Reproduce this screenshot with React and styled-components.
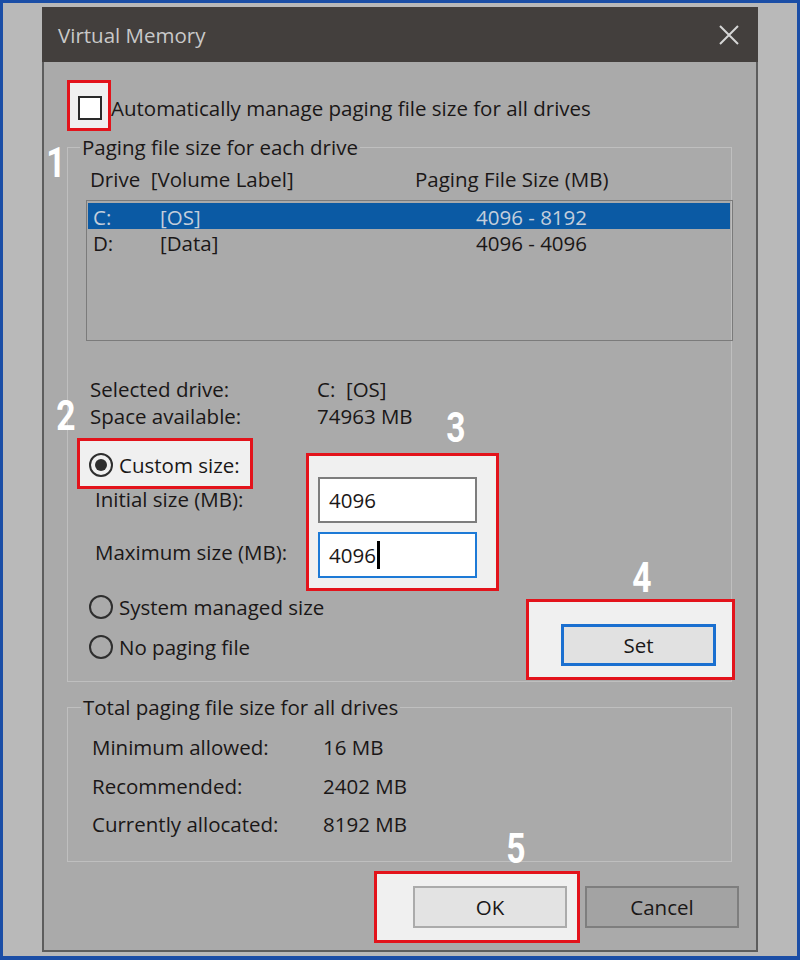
import React from 'react';
import styled, { createGlobalStyle } from 'styled-components';

const GlobalStyle = createGlobalStyle`
  html, body {
    margin: 0;
    padding: 0;
  }
  body {
    font-family: 'Open Sans', 'Noto Sans', sans-serif;
  }
`;

const Frame = styled.div`
  position: relative;
  box-sizing: border-box;
  width: 800px;
  height: 960px;
  border: 3px solid #1b4ea6;
  border-bottom-width: 4px;
  background: #b9b9b9;
  padding: 4px 0 0 39px;
`;

const Dialog = styled.div`
  width: 716px;
  height: 945px;
  display: flex;
  flex-direction: column;
`;

const TitleBar = styled.div`
  height: 55px;
  flex-shrink: 0;
  background: #433f3d;
  display: flex;
  align-items: center;
  justify-content: space-between;
  padding: 0 19px 0 16px;
  color: #c9c9c9;
  font-size: 20.5px;
`;

const Body = styled.div`
  flex: 1;
  background: #aaaaaa;
  border: 2px solid #5d5d5d;
  border-top: 0;
  padding: 18px 17px 0 23px;
  color: #1a1717;
  font-size: 20.5px;
  line-height: 24px;
  white-space: nowrap;
  display: flex;
  flex-direction: column;
  align-items: flex-start;
`;

const Highlight = styled.div`
  box-sizing: border-box;
  flex-shrink: 0;
  width: ${(p) => p.$w}px;
  height: ${(p) => p.$h}px;
  margin: ${(p) => p.$m || '0'};
  padding: ${(p) => p.$pad || '0'};
  border: 3px solid #e3131b;
  background: #f0f0f0;
`;

const CheckRow = styled.div`
  display: flex;
  align-items: flex-start;
`;

const CheckBox = styled.span`
  display: block;
  box-sizing: border-box;
  width: 24px;
  height: 24px;
  border: 2px solid #2a2a2a;
  background: #ffffff;
`;

const CheckLabel = styled.span`
  margin-top: 16px;
`;

const Group = styled.fieldset`
  box-sizing: border-box;
  width: 665px;
  min-width: 0;
  margin: ${(p) => p.$mt}px 0 0 0;
  padding: 0 0 ${(p) => p.$pb}px 0;
  border: 1px solid #bfbfbf;
`;

const Legend = styled.legend`
  margin-left: ${(p) => p.$ml}px;
  padding: 0 2px;
  line-height: 24px;
`;

const Columns = styled.div`
  display: flex;
  margin-top: ${(p) => p.$mt || 0}px;
  padding-left: ${(p) => p.$pl}px;
  line-height: ${(p) => p.$lh || 24}px;
`;

const Col = styled.span`
  flex-shrink: 0;
  width: ${(p) => p.$w}px;
`;

const List = styled.div`
  box-sizing: border-box;
  width: 647px;
  height: 141px;
  margin: 9px 0 0 18px;
  padding: 2px 2px 2px 1px;
  border: 1px solid #7b7b7b;
`;

const ListRow = styled.div`
  box-sizing: border-box;
  display: flex;
  height: 26px;
  padding: 1px 0 0 5px;
  line-height: 26px;
  background: ${(p) => (p.$selected ? '#0b5aa4' : 'transparent')};
  color: ${(p) => (p.$selected ? '#c3cedc' : 'inherit')};
`;

const Info = styled.div`
  margin-top: 35px;
`;

const Middle = styled.div`
  display: flex;
  align-items: flex-start;
  margin-top: 8px;
  padding-left: 9px;
`;

const LeftCol = styled.div`
  flex-shrink: 0;
  width: 229px;
  display: flex;
  flex-direction: column;
  align-items: flex-start;
`;

const RadioRow = styled.div`
  display: flex;
  align-items: center;
  gap: 6px;
  height: ${(p) => p.$h || 24}px;
  margin-top: ${(p) => p.$mt || 0}px;
  padding-left: ${(p) => p.$pl || 0}px;
`;

const Radio = styled.span`
  position: relative;
  box-sizing: border-box;
  flex-shrink: 0;
  width: 24px;
  height: 24px;
  border: 2px solid #2e2e2e;
  border-radius: 50%;

  &::after {
    content: '';
    display: ${(p) => (p.$checked ? 'block' : 'none')};
    position: absolute;
    left: 4px;
    top: 4px;
    width: 12px;
    height: 12px;
    border-radius: 50%;
    background: #2e2e2e;
  }
`;

const FieldLabel = styled.div`
  margin-top: ${(p) => p.$mt}px;
  padding-left: 18px;
`;

const Input = styled.div`
  box-sizing: border-box;
  width: 159px;
  height: 46px;
  margin-top: ${(p) => p.$mt || 0}px;
  display: flex;
  align-items: center;
  padding-left: 9px;
  background: #ffffff;
  border: 2px solid ${(p) => (p.$focused ? '#1d7ad6' : '#7d7d7d')};
`;

const Caret = styled.span`
  display: inline-block;
  width: 3px;
  height: 28px;
  margin-left: 1px;
  background: #000000;
`;

const Button = styled.div`
  box-sizing: border-box;
  flex-shrink: 0;
  width: ${(p) => p.$w}px;
  height: 42px;
  margin: ${(p) => p.$m || '0'};
  display: flex;
  align-items: center;
  justify-content: center;
  background: ${(p) => p.$bg};
  border: ${(p) => p.$border};
`;

const Totals = styled.div`
  display: flex;
  flex-direction: column;
  gap: 14.5px;
  margin-top: 16px;
`;

const ButtonRow = styled.div`
  align-self: stretch;
  display: flex;
  justify-content: flex-end;
  align-items: flex-start;
  margin-top: 9px;
`;

const Marker = styled.span`
  position: absolute;
  left: ${(p) => p.$x}px;
  top: ${(p) => p.$y}px;
  width: 40px;
  text-align: center;
  font-family: Roboto, 'Liberation Sans', sans-serif;
  font-weight: 700;
  font-size: 42px;
  line-height: 42px;
  color: #ffffff;
  transform: scaleX(0.8);
`;

const CloseIcon = () => (
  <svg width="20" height="20" viewBox="0 0 20 20">
    <path d="M1 1 L19 19 M19 1 L1 19" stroke="#d6d6d6" strokeWidth="2" fill="none" />
  </svg>
);

const drives = [
  { letter: 'C:', label: '[OS]', size: '4096 - 8192', selected: true },
  { letter: 'D:', label: '[Data]', size: '4096 - 4096' },
];

const totals = [
  ['Minimum allowed:', '16 MB'],
  ['Recommended:', '2402 MB'],
  ['Currently allocated:', '8192 MB'],
];

const markers = [
  ['1', 32.5, 138.6],
  ['2', 43, 391.6],
  ['3', 432.5, 403.6],
  ['4', 618.5, 553.6],
  ['5', 493, 824.6],
];

export default function App() {
  return (
    <>
      <GlobalStyle />
      <Frame>
        <Dialog>
          <TitleBar>
            <span>Virtual Memory</span>
            <CloseIcon />
          </TitleBar>
          <Body>
            <CheckRow>
              <Highlight $w={44} $h={51} $pad="13px 0 0 8px">
                <CheckBox />
              </Highlight>
              <CheckLabel>Automatically manage paging file size for all drives</CheckLabel>
            </CheckRow>

            <Group $mt={4} $pb={1}>
              <Legend $ml={12}>Paging file size for each drive</Legend>
              <Columns $mt={8} $pl={22}>
                <Col $w={325}>Drive&nbsp;&nbsp;[Volume Label]</Col>
                <span>Paging File Size (MB)</span>
              </Columns>
              <List>
                {drives.map((d) => (
                  <ListRow key={d.letter} $selected={d.selected}>
                    <Col $w={67}>{d.letter}</Col>
                    <Col $w={316}>{d.label}</Col>
                    <span>{d.size}</span>
                  </ListRow>
                ))}
              </List>
              <Info>
                <Columns $pl={22} $lh={27}>
                  <Col $w={227}>Selected drive:</Col>
                  <span>C:&nbsp;&nbsp;[OS]</span>
                </Columns>
                <Columns $pl={22} $lh={27}>
                  <Col $w={227}>Space available:</Col>
                  <span>74963 MB</span>
                </Columns>
              </Info>
              <Middle>
                <LeftCol>
                  <Highlight $w={176} $h={51} $pad="3px 0 0 9px">
                    <RadioRow $h={42}>
                      <Radio $checked />
                      <span>Custom size:</span>
                    </RadioRow>
                  </Highlight>
                  <FieldLabel $mt={-2}>Initial size (MB):</FieldLabel>
                  <FieldLabel $mt={29}>Maximum size (MB):</FieldLabel>
                  <RadioRow $mt={31} $pl={12}>
                    <Radio />
                    <span>System managed size</span>
                  </RadioRow>
                  <RadioRow $mt={16} $pl={12}>
                    <Radio />
                    <span>No paging file</span>
                  </RadioRow>
                </LeftCol>
                <Highlight $w={193} $h={138} $m="15px 0 0 0" $pad="21px 0 0 9px">
                  <Input>4096</Input>
                  <Input $mt={9} $focused>
                    4096
                    <Caret />
                  </Input>
                </Highlight>
                <Highlight $w={209} $h={81} $m="161px 0 0 27px" $pad="22px 0 0 32px">
                  <Button $w={155} $bg="#e1e1e1" $border="3px solid #1a6fd0">
                    Set
                  </Button>
                </Highlight>
              </Middle>
            </Group>

            <Group $mt={13} $pb={25}>
              <Legend $ml={13}>Total paging file size for all drives</Legend>
              <Totals>
                {totals.map(([k, v]) => (
                  <Columns key={k} $pl={24}>
                    <Col $w={231}>{k}</Col>
                    <span>{v}</span>
                  </Columns>
                ))}
              </Totals>
            </Group>

            <ButtonRow>
              <Highlight $w={206} $h={72} $pad="12px 0 0 36px">
                <Button $w={154} $bg="#e3e3e3" $border="2px solid #ababab">
                  OK
                </Button>
              </Highlight>
              <Button $w={154} $m="15px 0 0 5px" $bg="#a3a3a3" $border="2px solid #7e7e7e">
                Cancel
              </Button>
            </ButtonRow>
          </Body>
        </Dialog>
        {markers.map(([n, x, y]) => (
          <Marker key={n} $x={x} $y={y}>
            {n}
          </Marker>
        ))}
      </Frame>
    </>
  );
}
